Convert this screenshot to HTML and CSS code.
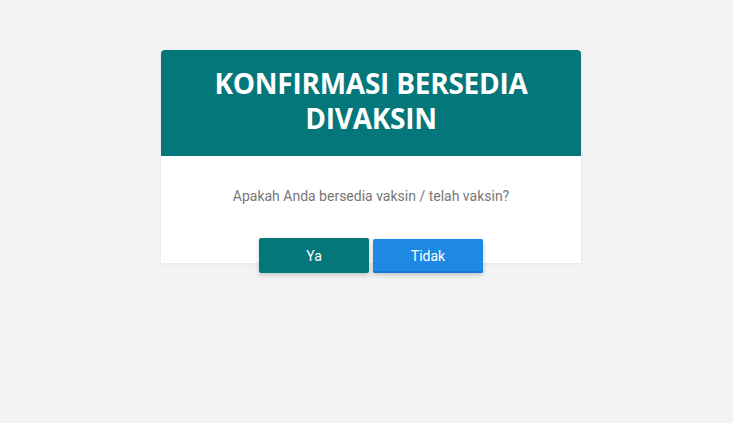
FILE: index.html
```html
<!DOCTYPE html>
<html>
<head>
<meta charset="utf-8">
<link rel="stylesheet" href="styles.css">
</head>
<body>
<div class="page">
  <div class="card">
    <div class="card-header">
      <h2 class="title">KONFIRMASI BERSEDIA DIVAKSIN</h2>
    </div>
    <div class="card-body">
      <p class="question">Apakah Anda bersedia vaksin / telah vaksin?</p>
      <div class="actions">
        <button class="btn btn-yes">Ya</button>
        <button class="btn btn-no">Tidak</button>
      </div>
    </div>
  </div>
</div>
</body>
</html>
```
FILE: styles.css
```css
html, body {
  margin: 0;
  padding: 0;
  background: #f3f3f3;
}
.page {
  min-height: 423px;
  box-sizing: border-box;
  padding: 50px 0 0 9px;
  display: flex;
  justify-content: center;
  align-items: flex-start;
}
.card {
  width: 420px;
  background: #ffffff;
  border-radius: 4px 4px 0 0;
  box-shadow: 0 1px 4px rgba(0,0,0,0.06);
}
.card-header {
  background: #04777a;
  border-radius: 4px 4px 0 0;
  padding: 16px 20px 20px;
}
.title {
  margin: 0;
  font-family: "Open Sans", sans-serif;
  font-weight: 700;
  font-size: 28px;
  letter-spacing: -0.25px;
  line-height: 35px;
  color: #ffffff;
  text-align: center;
}
.card-body {
  padding-top: 30px;
}
.question {
  margin: 0;
  font-family: Roboto, sans-serif;
  font-size: 14px;
  line-height: 20px;
  color: #777777;
  text-align: center;
}
.actions {
  margin-top: 32px;
  margin-bottom: -10px;
  display: flex;
  justify-content: center;
  align-items: flex-start;
  gap: 4px;
  position: relative;
  z-index: 1;
}
.btn {
  width: 110px;
  height: 35px;
  padding: 0;
  border: none;
  border-radius: 2px;
  font-family: Roboto, sans-serif;
  font-size: 14px;
  font-weight: 400;
  color: #ffffff;
  cursor: pointer;
  box-shadow: 0 2px 5px rgba(0,0,0,0.2);
}
.btn-yes {
  background: #04777a;
}
.btn-no {
  background: #1e88e5;
  height: 34px;
  margin-top: 1px;
  box-shadow: inset 0 -2px 0 #1976d2, 0 2px 5px rgba(0,0,0,0.2);
}
```
